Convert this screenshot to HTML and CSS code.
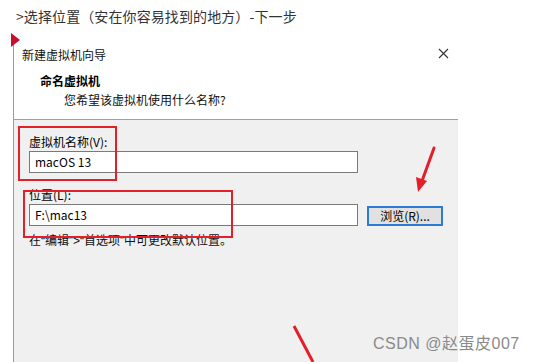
FILE: index.html
```html
<!DOCTYPE html>
<html lang="zh">
<head>
<meta charset="utf-8">
<title>新建虚拟机向导</title>
<link rel="stylesheet" href="styles.css">
</head>
<body>
<div class="caption">&gt;选择位置（安在你容易找到的地方）-下一步</div>
<div class="marker"></div>
<div class="dialog">
  <div class="top">
    <div class="titlebar">
      <span class="title">新建虚拟机向导</span>
      <span class="close">
        <svg width="11" height="11" viewBox="0 0 11 11"><path d="M1 1L10 10M10 1L1 10" stroke="#333" stroke-width="1.1" fill="none"/></svg>
      </span>
    </div>
    <div class="head">
      <div class="h1">命名虚拟机</div>
      <div class="h2">您希望该虚拟机使用什么名称?</div>
    </div>
  </div>
  <div class="body">
    <div class="label l1">虚拟机名称(V):</div>
    <div class="row">
      <div class="input">macOS 13</div>
    </div>
    <div class="label l2">位置(L):</div>
    <div class="row">
      <div class="input">F:\mac13</div>
      <div class="btn">浏览(R)...</div>
    </div>
    <div class="hint">在“编辑”&gt;“首选项”中可更改默认位置。</div>
  </div>
</div>
<div class="box box1"></div>
<div class="box box2"></div>
<svg class="arrows" width="538" height="362" viewBox="0 0 538 362">
  <path d="M434 148L422 181" stroke="#e3202a" stroke-width="3" stroke-linecap="round" fill="none"/>
  <path d="M418 192L416 177L427 181Z" fill="#e3202a"/>
  <path d="M294 326L313 362" stroke="#e3202a" stroke-width="3" fill="none"/>
</svg>
<div class="wm">CSDN @赵蛋皮007</div>
</body>
</html>
```
FILE: styles.css
```css
html, body {
  margin: 0;
  padding: 0;
  background: #fff;
  overflow: hidden;
  width: 538px;
  height: 362px;
}
body {
  font-family: "Noto Sans CJK SC", "Liberation Sans", sans-serif;
  color: #000;
  position: relative;
}
.caption {
  font-size: 14px;
  color: #333;
  padding: 6px 0 0 16px;
  height: 34px;
  line-height: 20px;
  box-sizing: border-box;
  letter-spacing: 0.1px;
}
.marker {
  position: absolute;
  left: 11px;
  top: 33px;
  width: 0;
  height: 0;
  border-top: 7px solid transparent;
  border-bottom: 7px solid transparent;
  border-left: 9px solid #c8102e;
}
.dialog {
  margin: 6px 0 0 13px;
  width: 445px;
  height: 330px;
  border-left: 1px solid #9a9a9a;
  box-sizing: border-box;
  font-size: 12px;
  display: flex;
  flex-direction: column;
}
.top {
  background: #fff;
  height: 80px;
  border-bottom: 1px solid #a0a0a0;
  box-sizing: border-box;
}
.titlebar {
  display: flex;
  justify-content: space-between;
  align-items: center;
  height: 28px;
  padding: 0 9px 0 8px;
}
.title {
  font-size: 12px;
  color: #111;
}
.close {
  display: flex;
  margin-top: -1px;
}
.head {
  padding-left: 26px;
}
.h1 {
  font-weight: bold;
  font-size: 12px;
  line-height: 18px;
  margin-top: 4px;
}
.h2 {
  padding-left: 24px;
  line-height: 18px;
  margin-top: 1px;
  color: #111;
}
.body {
  flex: 1;
  background: #f0f0f0;
  padding: 13px 0 0 15px;
}
.label {
  line-height: 18px;
  height: 18px;
}
.l2 {
  margin-top: 13px;
}
.row {
  display: flex;
  align-items: center;
  gap: 9px;
}
.input {
  width: 329px;
  height: 22px;
  box-sizing: border-box;
  border: 1px solid #7a7a7a;
  background: #fff;
  padding-left: 5px;
  line-height: 20px;
  font-size: 12px;
}
.btn {
  width: 76px;
  height: 20px;
  box-sizing: border-box;
  border: 2px solid #2a7bd4;
  background: #e1e1e1;
  text-align: center;
  line-height: 16px;
  font-size: 12px;
  margin-top: 2px;
}
.hint {
  margin-top: 6px;
  line-height: 18px;
  color: #111;
  font-family: "Liberation Sans", "Noto Sans CJK SC", sans-serif;
}
.box {
  position: absolute;
  border: 2px solid #e3202a;
  box-sizing: border-box;
}
.box1 {
  left: 18px;
  top: 126px;
  width: 99px;
  height: 55px;
}
.box2 {
  left: 23px;
  top: 190px;
  width: 210px;
  height: 48px;
}
.arrows {
  position: absolute;
  left: 0;
  top: 0;
}
.wm {
  position: absolute;
  left: 373px;
  top: 335px;
  font-family: "Liberation Sans", "Noto Sans CJK SC", sans-serif;
  font-size: 16px;
  color: #8a8a8a;
  line-height: 18px;
  letter-spacing: 0.5px;
}
```
